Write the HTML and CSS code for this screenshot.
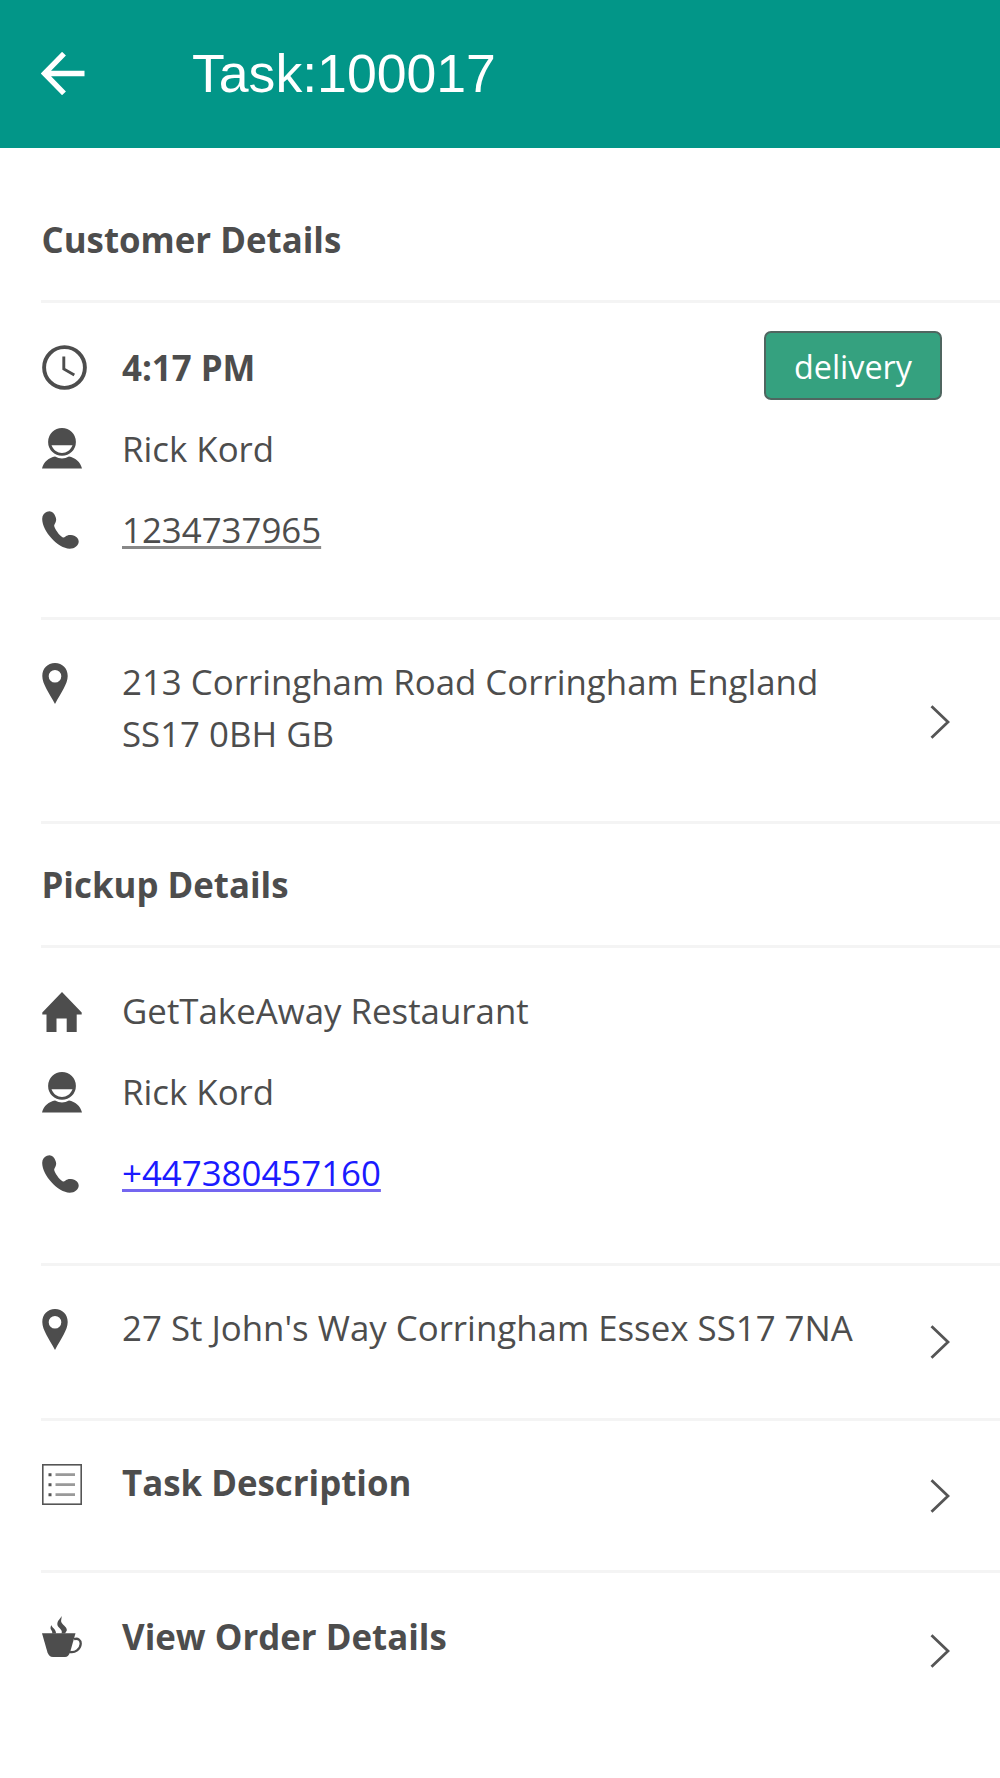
FILE: index.html
```html
<!DOCTYPE html>
<html lang="en">
<head>
<meta charset="utf-8">
<title>Task:100017</title>
<link rel="stylesheet" href="styles.css">
</head>
<body>
<svg width="0" height="0" class="defs">
  <symbol id="person" viewBox="0 0 40 41"><path fill-rule="evenodd" d="M20 0a13.7 13.7 0 0 1 0 27.800a13.700 13.700 0 0 1 0-27.800zM9.500 17.300c2 5 6 7.700 10.500 7.700s8.500-2.700 10.500-7.700z"/><path d="M0 40.500C1.500 34 7 29.500 13 28.500q7 4 14 0c6 1 11.500 5.500 13 12z"/></symbol>
  <symbol id="phone" viewBox="0 0 37 38"><path d="M5 .8C9 -.8 12 1.500 13.600 6c1.600 4-.6 6-1.400 8.300-.5 2 5 10.700 8.700 12.200 2.500 0 3.500-3 8-2.500 5 .5 7.800 3.500 7.800 6.500 0 4-4 7.200-9 7.200C16 37.500 0 20 .2 7.800.2 4 2.500 1.700 5 .8z"/></symbol>
  <symbol id="pin" viewBox="0 0 26 41"><path fill-rule="evenodd" d="M13 0C5.500 0 .3 5.500.3 13c0 8 6.700 16.500 12.700 28 6-11.500 12.700-20 12.700-28C25.700 5.500 20.500 0 13 0zm0 7a6.300 6.300 0 1 1 0 12.600A6.300 6.300 0 0 1 13 7z"/></symbol>
  <symbol id="chevron" viewBox="0 0 20 34"><path d="M1.500 1.200L18 17 1.500 32.800" fill="none" stroke="#555" stroke-width="2.800"/></symbol>
</svg>
<header class="toolbar">
  <svg class="back" viewBox="0 0 44 43"><path d="M23 1.700L3.500 21.500 23 41.300M3 21.500h40.500" fill="none" stroke="#fff" stroke-width="5.400"/></svg>
  <h1 class="title">Task:100017</h1>
</header>
<main class="content">
  <h2 class="heading first">Customer Details</h2>
  <section class="contacts customer">
    <div class="row"><span class="slot"><svg class="icon clock" viewBox="0 0 45 45"><circle cx="22.500" cy="22.500" r="20.400" fill="none" stroke="#4d4d4d" stroke-width="3.900"/><path d="M21.800 11.500V24l10.500 6" fill="none" stroke="#4d4d4d" stroke-width="2.900"/></svg></span><b class="time">4:17 PM</b><span class="badge">delivery</span></div>
    <div class="row"><span class="slot"><svg class="icon person"><use href="#person"/></svg></span><span>Rick Kord</span></div>
    <div class="row"><span class="slot"><svg class="icon phone"><use href="#phone"/></svg></span><span class="number">1234737965</span></div>
  </section>
  <section class="item home"><svg class="icon pin"><use href="#pin"/></svg><p class="label">213 Corringham Road Corringham England<br>SS17 0BH GB</p><svg class="chevron"><use href="#chevron"/></svg></section>
  <h2 class="heading">Pickup Details</h2>
  <section class="contacts restaurant">
    <div class="row"><span class="slot"><svg class="icon house" viewBox="0 0 40 40"><path d="M20 0L.3 20.500v2H4.500V40h10V26.500h10.200V40h10V22.500h5v-2z"/></svg></span><span>GetTakeAway Restaurant</span></div>
    <div class="row"><span class="slot"><svg class="icon person"><use href="#person"/></svg></span><span>Rick Kord</span></div>
    <div class="row"><span class="slot"><svg class="icon phone"><use href="#phone"/></svg></span><a class="number link" href="#">+447380457160</a></div>
  </section>
  <section class="item pickup"><svg class="icon pin"><use href="#pin"/></svg><p class="label">27 St John's Way Corringham Essex SS17 7NA</p><svg class="chevron"><use href="#chevron"/></svg></section>
  <section class="item task"><svg class="icon list" viewBox="0 0 40 41"><rect x=".8" y=".8" width="38.400" height="39.400" fill="none" stroke="#555" stroke-width="1.600"/><path d="M13.500 10.700h19.500M13.500 20.700h19.500M13.500 30.700h19.500" stroke="#999" stroke-width="2.800"/><path d="M6.500 10.700h3M6.500 20.700h3M6.500 30.700h3" stroke="#555" stroke-width="3"/></svg><b class="label">Task Description</b><svg class="chevron"><use href="#chevron"/></svg></section>
  <section class="item order"><svg class="icon cup" viewBox="0 0 40 41"><path d="M0 17.200h33.500L28 36.500c-1 2.500-2.500 4.500-5 4.500H11c-3 0-4.500-2-5.500-4.500z"/><path d="M19.500 0c.5 3-1.300 4.500.3 7 2 2.800 5.500 4.500 5 7.500l-1.800 3h-3.500c2-4-4.500-6-4.200-9.500C15.500 4 18.500 3 19.500 0zM9.500 9c0 2.700 4.800 4 4.500 8.500h-4c1.200-2-1.500-3.500-1.500-5.500 0-1 .3-2 1-3z"/><path d="M32 23.200c4-1.500 7 1 6.700 4.800-.4 5.500-5.700 9-10.700 8" fill="none" stroke="#4d4d4d" stroke-width="2.300"/></svg><b class="label">View Order Details</b><svg class="chevron"><use href="#chevron"/></svg></section>
</main>
</body>
</html>
```
FILE: styles.css
```css
*{box-sizing:border-box}
body{margin:0;background:#fff;color:#4d4d4d;font:34.85px/51.5px "Open Sans",sans-serif}
.defs{display:block;height:0}
.toolbar{height:148px;background:#029688;display:flex;align-items:center;padding:0 0 1px 41px}
.back{width:44px;height:43px;margin-right:107px}
.title{margin:0 0 2px;color:#fff;font:400 53.6px/60px "Liberation Sans",sans-serif}
.content{padding-left:41px}
.heading,.contacts,.item{border-bottom:3px solid #f4f4f4}
.heading{margin:0;height:124px;padding:35px 0 0 .5px;font-size:34.85px;font-weight:700}
.first{height:155px;padding-top:66px}
.contacts{height:317px;padding-left:.5px}
.customer{padding-top:24px}
.restaurant{height:318px;padding-top:22px}
.row{height:81px;display:flex;align-items:center}
.slot{width:80.5px;flex:none}
.icon{display:block;flex:none;fill:#4d4d4d}
.restaurant .slot{padding-top:2px}
.clock{width:45px;height:45px}
.person{width:40px;height:41px}
.phone{width:37px;height:38px}
.pin{width:26px;height:41px}
.house{width:40px;height:40px}
.list,.cup{width:40px;height:41px}
.badge{margin:-5px 58px 0 auto;width:178px;height:69px;border:2px solid #4f6660;border-radius:7px;background:#35a17f;color:#fff;text-align:center;font-size:32.3px;line-height:67px}
.number{text-decoration-line:underline;text-decoration-thickness:3px;text-decoration-color:#888;text-underline-offset:3px;text-decoration-skip-ink:none}
.link{color:#1a1aff;text-decoration-color:#7466f0}
.item{display:grid;grid-template-columns:80.5px 1fr 20px;align-items:start;padding-left:.5px;padding-right:50px}
.item .icon{margin-top:7px}
.label{margin:0;white-space:nowrap}
.chevron{display:block;width:20px;height:34px;margin-top:23px}
.home{height:204px;padding-top:36px}
.home .chevron{margin-top:49px}
.pickup{height:155px;padding-top:36px}
.task{height:152px;padding-top:36px}
.task .chevron{margin-top:22px}
.order{height:152px;padding-top:38px;border-bottom:0}
.order .icon{margin-top:5px}
```
